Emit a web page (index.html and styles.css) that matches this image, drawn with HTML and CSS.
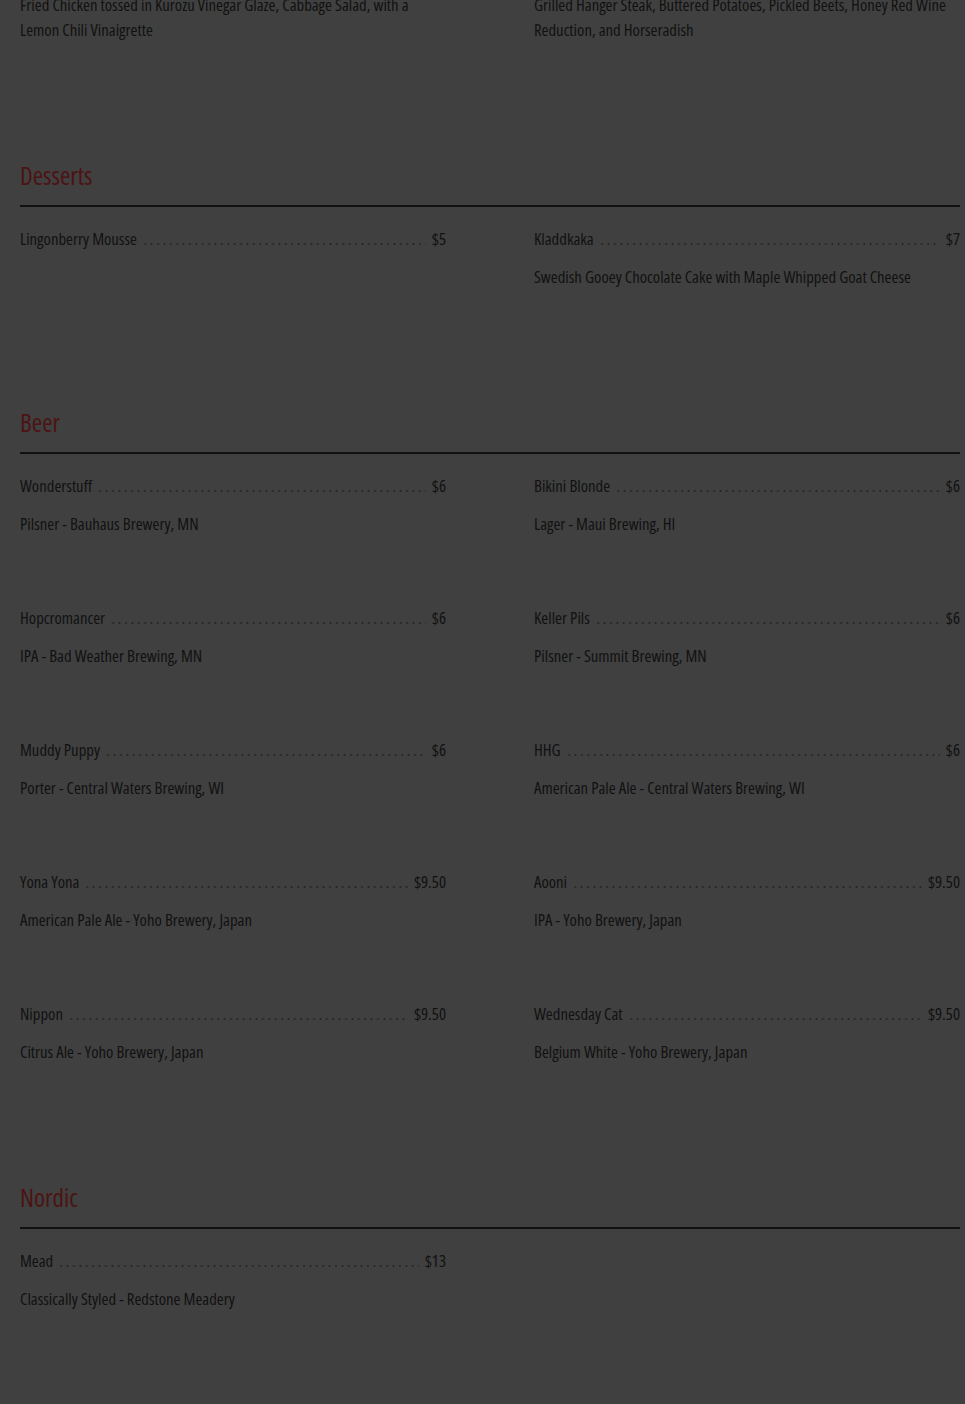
FILE: index.html
```html
<!DOCTYPE html>
<html lang="en">
<head>
    <meta charset="UTF-8">
    <meta name="viewport" content="width=device-width, initial-scale=1.0">
    <title>Menu</title>
    <link rel="stylesheet" href="styles.css">
</head>
<body>
    <div class="menu">
        <!-- tail of the previous section, scrolled past -->
        <div class="menu-grid menu-grid--cut">
            <p class="item-desc">Fried Chicken tossed in Kurozu Vinegar Glaze, Cabbage Salad, with a Lemon Chili Vinaigrette</p>
            <p class="item-desc">Grilled Hanger Steak, Buttered Potatoes, Pickled Beets, Honey Red Wine Reduction, and Horseradish</p>
        </div>

        <section class="menu-section">
            <h2 class="section-title">Desserts</h2>
            <div class="menu-grid">
                <div class="item">
                    <div class="item-row"><span class="item-name">Lingonberry Mousse</span><span class="leader"></span><span class="item-price">$5</span></div>
                </div>
                <div class="item">
                    <div class="item-row"><span class="item-name">Kladdkaka</span><span class="leader"></span><span class="item-price">$7</span></div>
                    <p class="item-desc">Swedish Gooey Chocolate Cake with Maple Whipped Goat Cheese</p>
                </div>
            </div>
        </section>

        <section class="menu-section">
            <h2 class="section-title">Beer</h2>
            <div class="menu-grid">
                <div class="item">
                    <div class="item-row"><span class="item-name">Wonderstuff</span><span class="leader"></span><span class="item-price">$6</span></div>
                    <p class="item-desc">Pilsner - Bauhaus Brewery, MN</p>
                </div>
                <div class="item">
                    <div class="item-row"><span class="item-name">Bikini Blonde</span><span class="leader"></span><span class="item-price">$6</span></div>
                    <p class="item-desc">Lager - Maui Brewing, HI</p>
                </div>
                <div class="item">
                    <div class="item-row"><span class="item-name">Hopcromancer</span><span class="leader"></span><span class="item-price">$6</span></div>
                    <p class="item-desc">IPA - Bad Weather Brewing, MN</p>
                </div>
                <div class="item">
                    <div class="item-row"><span class="item-name">Keller Pils</span><span class="leader"></span><span class="item-price">$6</span></div>
                    <p class="item-desc">Pilsner - Summit Brewing, MN</p>
                </div>
                <div class="item">
                    <div class="item-row"><span class="item-name">Muddy Puppy</span><span class="leader"></span><span class="item-price">$6</span></div>
                    <p class="item-desc">Porter - Central Waters Brewing, WI</p>
                </div>
                <div class="item">
                    <div class="item-row"><span class="item-name">HHG</span><span class="leader"></span><span class="item-price">$6</span></div>
                    <p class="item-desc">American Pale Ale - Central Waters Brewing, WI</p>
                </div>
                <div class="item">
                    <div class="item-row"><span class="item-name">Yona Yona</span><span class="leader"></span><span class="item-price">$9.50</span></div>
                    <p class="item-desc">American Pale Ale - Yoho Brewery, Japan</p>
                </div>
                <div class="item">
                    <div class="item-row"><span class="item-name">Aooni</span><span class="leader"></span><span class="item-price">$9.50</span></div>
                    <p class="item-desc">IPA - Yoho Brewery, Japan</p>
                </div>
                <div class="item">
                    <div class="item-row"><span class="item-name">Nippon</span><span class="leader"></span><span class="item-price">$9.50</span></div>
                    <p class="item-desc">Citrus Ale - Yoho Brewery, Japan</p>
                </div>
                <div class="item">
                    <div class="item-row"><span class="item-name">Wednesday Cat</span><span class="leader"></span><span class="item-price">$9.50</span></div>
                    <p class="item-desc">Belgium White - Yoho Brewery, Japan</p>
                </div>
            </div>
        </section>

        <section class="menu-section">
            <h2 class="section-title">Nordic</h2>
            <div class="menu-grid">
                <div class="item">
                    <div class="item-row"><span class="item-name">Mead</span><span class="leader"></span><span class="item-price">$13</span></div>
                    <p class="item-desc">Classically Styled - Redstone Meadery</p>
                </div>
            </div>
        </section>
    </div>
</body>
</html>
```

FILE: styles.css
```css
/* Menu page, dimmed behind an overlay */
body {
    margin: 0;
    background-color: #404040;
    color: #111;
    font-family: "Open Sans", "Liberation Sans", sans-serif;
    font-stretch: 75%;
    font-weight: 500;
    font-size: 16.7px;
    line-height: 25px;
}
.menu {
    width: 940px;
    padding: 0 0 80px 20px;
}
.menu-grid {
    display: grid;
    grid-template-columns: 426px 426px;
    column-gap: 88px;
    row-gap: 69px;
}
.menu-grid--cut {
    margin-top: -8px;
}
.menu-section {
    margin-top: 118px;
}
.section-title {
    margin: 0 0 19px;
    padding-bottom: 15px;
    border-bottom: 2px solid #111;
    font-size: 25px;
    line-height: 30px;
    font-weight: 500;
    color: #4c1313;
}
.item-row {
    display: flex;
    align-items: baseline;
}
.item-name {
    white-space: nowrap;
}
.leader {
    flex: 1;
    height: 2px;
    margin: 0 6px 0 5px;
    background-image: radial-gradient(circle, #222 0.9px, transparent 1.1px);
    background-size: 6.4px 2px;
    background-repeat: repeat-x;
}
.item-price {
    white-space: nowrap;
}
.item-desc {
    margin: 13px 0 0;
}
.menu-grid--cut .item-desc {
    margin: 0;
}
```
